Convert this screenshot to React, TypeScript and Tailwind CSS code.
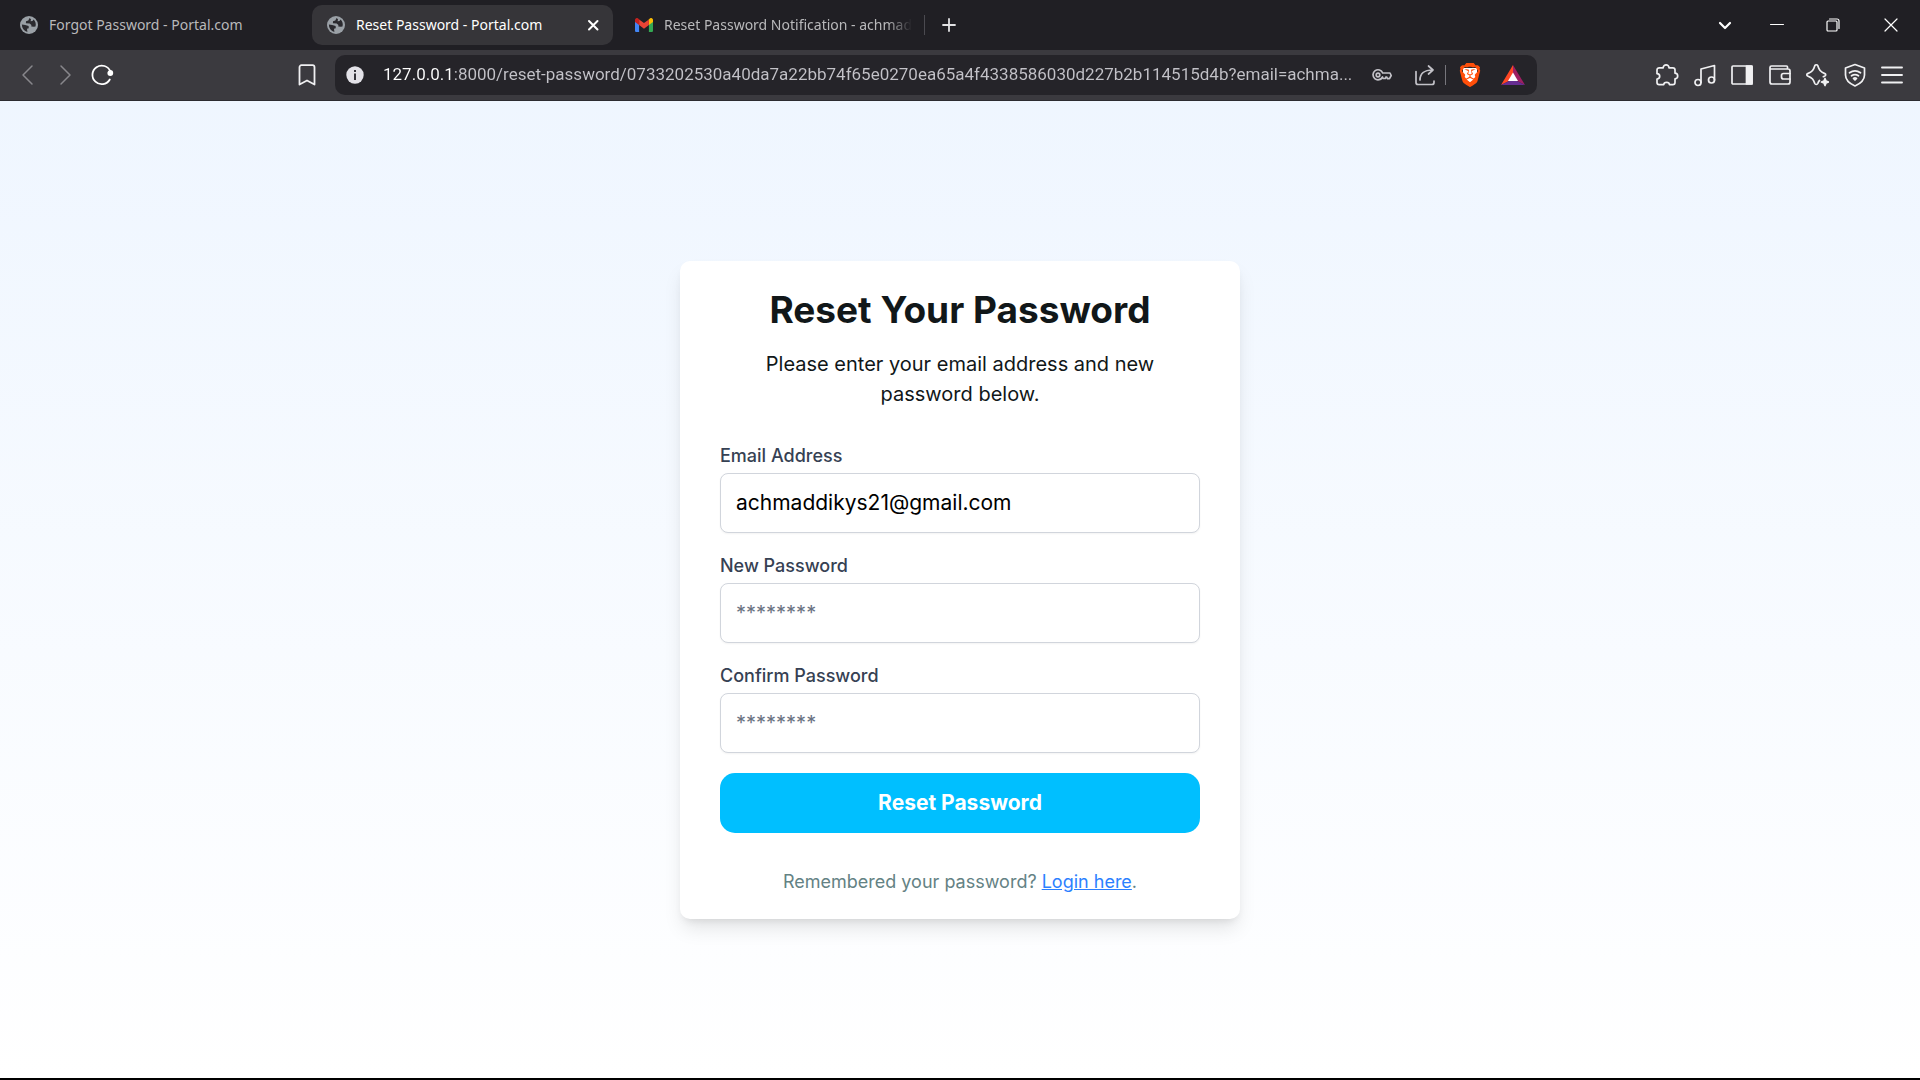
import React from "react";
import { SiBrave } from "react-icons/si";

const URL_TEXT =
  "127.0.0.1:8000/reset-password/0733202530a40da7a22bb74f65e0270ea65a4f4338586030d227b2b114515d4b?email=achma...";

type IconProps = { children: React.ReactNode; className?: string; box?: string; stroke?: number };

function Icon({ children, className = "size-6", box = "0 0 24 24", stroke = 1.7 }: IconProps) {
  return (
    <svg
      viewBox={box}
      className={`shrink-0 ${className}`}
      fill="none"
      stroke="currentColor"
      strokeWidth={stroke}
      strokeLinecap="round"
      strokeLinejoin="round"
      aria-hidden="true"
    >
      {children}
    </svg>
  );
}

function Globe() {
  return (
    <svg viewBox="0 0 18 18" className="size-[18px] shrink-0" aria-hidden="true">
      <circle cx="9" cy="9" r="9" fill="#9aa0a6" />
      <path
        d="M9.6 1.9 8.3 4.4 6 5.2 5.9 7.2 9.7 7.4 11.4 9 11.3 10.6 13.9 10.8 15.5 10.4A7.1 7.1 0 0 0 13.6 3.5L12.5 4.9 10.6 5.2 11 3.2Z"
        fill="#2b2a2f"
      />
      <path d="M1.9 8.6 5.2 9.1 8.6 10 8.8 12.2 7 12.8 7.4 15.9A7.1 7.1 0 0 1 1.9 8.6Z" fill="#2b2a2f" />
    </svg>
  );
}

function Gmail() {
  return (
    <svg viewBox="0 0 18 14" className="h-3.5 w-[18px] shrink-0" aria-hidden="true">
      <path d="M0 3v9.7C0 13.4.6 14 1.3 14H4.1V6Z" fill="#4285f4" />
      <path d="M13.9 14h2.8c.7 0 1.3-.6 1.3-1.3V3l-4.1 3Z" fill="#34a853" />
      <path d="M13.9 1.4V7L18 3.9V2c0-1.7-1.9-2.6-3.2-1.6Z" fill="#fbbc04" />
      <path d="M4.1 7V1.4L9 5.1l4.9-3.7V7L9 10.7Z" fill="#ea4335" />
      <path d="M0 2v1.9L4.1 7V1.4L3.2.4C1.9-.6 0 .3 0 2Z" fill="#c5221f" />
    </svg>
  );
}

function TabStrip() {
  return (
    <div className="flex h-[50px] items-center bg-[#201f24] text-sm text-[#b9b9bb]">
      <div className="flex h-10 w-[312px] items-center gap-[11px] pl-5">
        <Globe />
        <span className="whitespace-nowrap">Forgot Password - Portal.com</span>
      </div>
      <div className="flex h-10 w-[301px] items-center gap-[11px] rounded-[10px] bg-[#363539] pr-3 pl-[15px] text-white">
        <Globe />
        <span className="flex-1 whitespace-nowrap">Reset Password - Portal.com</span>
        <button type="button" aria-label="Close tab" className="flex size-4 items-center justify-center">
          <Icon className="size-4" box="0 0 16 16" stroke={2}>
            <path d="m4 4 8.500 8.500M12.500 4 4 12.500" />
          </Icon>
        </button>
      </div>
      <div className="flex h-10 w-[311px] items-center gap-[11px] pl-[22px]">
        <Gmail />
        <span className="mask-r-from-90% mask-r-to-100% whitespace-nowrap">
          Reset Password Notification - achmad
        </span>
      </div>
      <div className="h-5 w-px bg-[#4b4a50]" />
      <button type="button" aria-label="New tab" className="ml-4 text-[#e2e2e4]">
        <Icon className="size-4" box="0 0 16 16" stroke={1.8}>
          <path d="M8 2v12M2 8h12" />
        </Icon>
      </button>
      <div className="ml-auto flex items-center text-white">
        <button type="button" aria-label="Search tabs" className="flex w-[50px] justify-center">
          <Icon className="size-4" box="0 0 16 16" stroke={2.2}>
            <path d="m3 6 5 5 5-5" />
          </Icon>
        </button>
        <button type="button" aria-label="Minimize" className="flex w-[54px] justify-center">
          <Icon className="size-3.5" box="0 0 14 14" stroke={1}>
            <path d="M.5 6.500h13" />
          </Icon>
        </button>
        <button type="button" aria-label="Restore" className="flex w-[58px] justify-center">
          <Icon className="size-3.5" box="0 0 14 14" stroke={1.2}>
            <rect x="1" y="3" width="10" height="10" rx="1" />
            <path d="M3.500 1H11a2 2 0 0 1 2 2v7.500" />
          </Icon>
        </button>
        <button type="button" aria-label="Close window" className="flex w-[58px] justify-center">
          <Icon className="size-3.5" box="0 0 14 14" stroke={1.2}>
            <path d="m1 1 12 12M13 1 1 13" />
          </Icon>
        </button>
      </div>
    </div>
  );
}

function Toolbar() {
  return (
    <div className="flex h-[51px] items-center border-b border-[#2c2b30] bg-[#3b3a3f] text-[#f0f0f2]">
      <div className="flex w-[335px] items-center pl-4">
        <button type="button" aria-label="Back" className="text-[#88878c]">
          <Icon stroke={1.5}>
            <path d="M16 3 7 12l9 9" />
          </Icon>
        </button>
        <button type="button" aria-label="Forward" className="ml-3.5 text-[#88878c]">
          <Icon stroke={1.5}>
            <path d="m7 3 9 9-9 9" />
          </Icon>
        </button>
        <button type="button" aria-label="Reload" className="ml-3 text-white">
          <Icon stroke={1.8}>
            <path d="M19.800 16.500A9.300 9.300 0 1 1 20.400 8.500" />
            <circle cx="20.3" cy="10" r="2" fill="currentColor" />
          </Icon>
        </button>
        <button type="button" aria-label="Bookmark" className="ml-auto mr-4">
          <Icon stroke={1.8}>
            <path d="M4.500 4.200a2 2 0 0 1 2-2h11a2 2 0 0 1 2 2V21.500L12 17.500 4.500 21.500Z" />
          </Icon>
        </button>
      </div>
      <div className="flex h-10 max-w-[1202px] flex-1 items-center rounded-[10px] bg-[#252429] pr-3 pl-[11px] text-[#c3c2c8]">
        <button type="button" aria-label="Site information">
          <svg viewBox="0 0 18 18" className="size-[18px]" aria-hidden="true">
            <circle cx="9" cy="9" r="8.700" fill="#e3e2e8" />
            <path d="M8 4h2v2H8zM8 7.500h2V14H8z" fill="#34333a" />
          </svg>
        </button>
        <input
          type="text"
          aria-label="Address"
          readOnly
          defaultValue={URL_TEXT}
          className="ml-[19px] min-w-0 flex-1 bg-linear-to-r from-white from-[70px] to-[#c3c2c8] to-[70px] bg-clip-text font-['Roboto',sans-serif] text-[17px] text-transparent outline-none"
        />
        <button type="button" aria-label="Passwords" className="ml-4">
          <Icon className="size-5" box="0 0 20 20">
            <path d="M10.700 8H18l1.200 2.500-1.700 3.200h-2L14.800 12h-1l-.5 1.500h-2.200L10.500 12A5 5 0 1 1 10.700 8Z" />
            <circle cx="6" cy="10" r="1.8" />
          </Icon>
        </button>
        <button type="button" aria-label="Share" className="ml-[22px]">
          <Icon className="size-[22px]" box="0 0 22 22">
            <path d="M2 7.500V18.500a2 2 0 0 0 2 2h14a2 2 0 0 0 2-2V17" />
            <path d="M6 16c0-6 4-10 12.500-10M14.500 2l4.500 4-4.500 4" />
          </Icon>
        </button>
        <div className="ml-[9px] h-5 w-px bg-[#77767c]" />
        <button type="button" aria-label="Brave Shields" className="ml-3">
          <svg viewBox="0 0 24 24" className="size-6" aria-hidden="true">
            <path d="M5 5h14v8l-3 5-4 3-4-3-3-5Z" fill="#fff" />
            <SiBrave size={24} color="#ff4f0a" />
          </svg>
        </button>
        <button type="button" aria-label="Brave Rewards" className="ml-[19px]">
          <svg viewBox="0 0 24 20" className="h-5 w-6" aria-hidden="true">
            <path d="M12 0 0 20l8-4 4-7Z" fill="#ff4724" />
            <path d="M12 0v9l4 7 8 4Z" fill="#9e1f63" />
            <path d="M0 20h24l-8-4H8Z" fill="#662d91" />
            <path d="m12 7.500-5 8.500h10Z" fill="#fff" />
          </svg>
        </button>
      </div>
      <div className="ml-auto flex w-[265px] items-center justify-between pr-4">
        <button type="button" aria-label="Extensions">
          <Icon>
            <path d="M2 7a2.200 2.200 0 0 1 2.200-2.200H8.200C8.200 1 14 1 14 4.800h3.800A2.200 2.200 0 0 1 20 7v3.200c3.600.3 3.600 5.300 0 5.600v3.700a2.200 2.200 0 0 1-2.200 2.200H14.500c-.3-3-5.500-3-5.800 0H4.200A2.200 2.200 0 0 1 2 19.500V16c3.600-.3 3.600-5 0-5.300Z" />
          </Icon>
        </button>
        <button type="button" aria-label="Media">
          <Icon>
            <circle cx="5" cy="19.5" r="3" />
            <circle cx="18.5" cy="17" r="3" />
            <path d="M8 19.500V6l13.500-3.500V17" />
          </Icon>
        </button>
        <button type="button" aria-label="Sidebar">
          <Icon>
            <rect x="2" y="3" width="20" height="18" rx="1" />
            <path d="M16.500 3H22v18h-5.500Z" fill="currentColor" />
          </Icon>
        </button>
        <button type="button" aria-label="Wallet">
          <Icon>
            <path d="M19.500 6V4a1 1 0 0 0-1-1H3.500a1.500 1.500 0 0 0-1.500 1.500V19a2 2 0 0 0 2 2h16a2 2 0 0 0 2-2V8a2 2 0 0 0-2-2H2.500" />
            <path d="M22 10.500h-6.500a2 2 0 0 0-2 2v1.500a2 2 0 0 0 2 2H22" />
          </Icon>
        </button>
        <button type="button" aria-label="Leo AI">
          <Icon>
            <path d="M14.500 17.500c-.8.600-1.200 1.500-1.700 3-.6 1.300-2.400 1.300-3 0C8.500 16.500 7.500 15 2.700 13c-1.200-.6-1.200-1.800 0-2.400C7.500 8.600 8.500 7 9.800 2.700c.6-1.300 2.400-1.300 3 0C14.200 7 15.200 8.600 19.800 10.600c1.200.6 1.200 1.800 0 2.400l-1.500.7" />
            <path d="m20 15.500 1 2.500 2.500 1-2.500 1-1 2.500-1-2.500-2.500-1 2.500-1Z" fill="currentColor" />
          </Icon>
        </button>
        <button type="button" aria-label="VPN">
          <Icon>
            <path d="M12 1.500 21.500 5v7c0 5-4 8.500-9.500 11C6.500 20.500 2.500 17 2.500 12V5Z" />
            <path d="M6.500 9.800c3.500-2.600 7.500-2.600 11 0M8.500 12.800c2.200-1.600 4.800-1.600 7 0" />
            <path d="M10.500 15.500c1-.7 2-.7 3 0L12 17Z" fill="currentColor" />
          </Icon>
        </button>
        <button type="button" aria-label="Menu">
          <Icon stroke={1.9}>
            <path d="M2 4.500h20M2 12h20M2 19.500h20" />
          </Icon>
        </button>
      </div>
    </div>
  );
}

type FieldProps = { id: string; label: string; type: string; value?: string; placeholder?: string };

function Field({ id, label, type, value, placeholder }: FieldProps) {
  return (
    <div className="flex flex-col gap-1">
      <label htmlFor={id} className="text-lg/[26px] font-medium text-gray-700">
        {label}
      </label>
      <input
        id={id}
        type={type}
        defaultValue={value}
        placeholder={placeholder}
        className="h-[60px] w-full rounded-lg border border-gray-300 bg-white px-[15px] text-[21px] text-black shadow-xs outline-none placeholder:text-xl placeholder:text-gray-500"
      />
    </div>
  );
}

export default function App() {
  return (
    <div className="flex min-h-screen flex-col border-b-2 border-black bg-white">
      <header className="font-['Noto_Sans','Open_Sans',sans-serif]">
        <TabStrip />
        <Toolbar />
      </header>
      <main className="flex flex-1 items-center justify-center bg-linear-to-b from-blue-50 to-white font-['Inter',sans-serif]">
        <section className="w-full max-w-[560px] rounded-[10px] bg-white px-10 pt-6 pb-6 shadow-[0_12px_20px_-3px_rgba(0,0,0,0.1),0_5px_8px_-4px_rgba(0,0,0,0.1)]">
          <h1 className="text-center text-[37px]/[50px] font-bold text-[#111719]">Reset Your Password</h1>
          <p className="mt-3.5 px-10 text-center text-xl/[30px] text-[#111719]">
            Please enter your email address and new password below.
          </p>
          <form className="mt-[34px] flex flex-col gap-5" onSubmit={(e) => e.preventDefault()}>
            <Field id="email" label="Email Address" type="email" value="achmaddikys21@gmail.com" />
            <Field id="password" label="New Password" type="password" placeholder="********" />
            <Field id="confirm" label="Confirm Password" type="password" placeholder="********" />
            <button type="submit" className="h-[60px] rounded-[15px] bg-[#00bfff] text-[21px] font-bold text-white">
              Reset Password
            </button>
          </form>
          <p className="mt-9 text-center text-lg/[26px] text-[#648284]">
            Remembered your password?{" "}
            <a href="#login" className="text-blue-500 underline">
              Login here
            </a>
            .
          </p>
        </section>
      </main>
    </div>
  );
}
